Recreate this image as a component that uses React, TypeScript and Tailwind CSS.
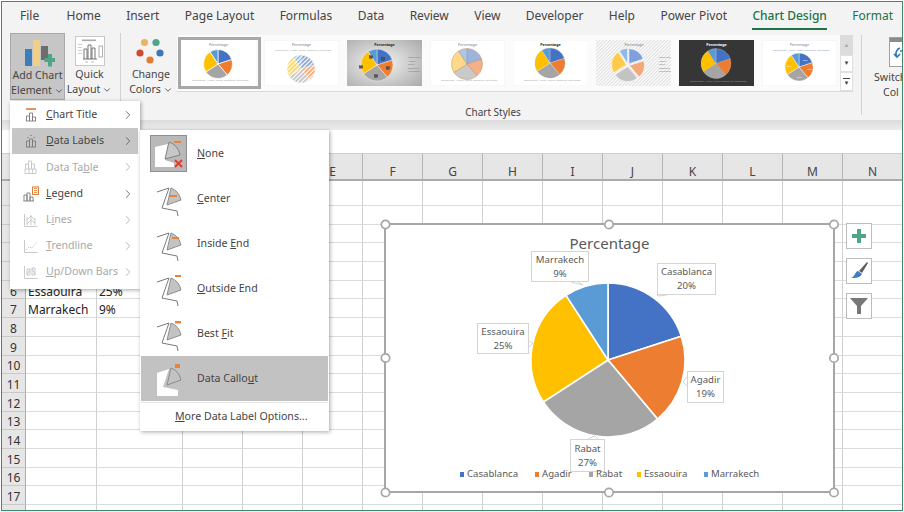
import React from "react";
import { ChevronDown, ChevronRight } from "lucide-react";

const COLORS = ["#4472c4", "#ed7d31", "#a5a5a5", "#ffc000", "#5b9bd5"];
const WASHED = ["#9db4e0", "#f5b08a", "#c9c9c9", "#ffd98a", "#a9c8e8"];
const ANGLES = [0, 72, 140, 237, 327, 360];

function pt(cx: number, cy: number, r: number, a: number) {
  const t = (a * Math.PI) / 180;
  return [cx + r * Math.sin(t), cy - r * Math.cos(t)];
}
function slice(cx: number, cy: number, r: number, a0: number, a1: number) {
  const [x0, y0] = pt(cx, cy, r, a0);
  const [x1, y1] = pt(cx, cy, r, a1);
  return `M${cx} ${cy}L${x0.toFixed(2)} ${y0.toFixed(2)}A${r} ${r} 0 ${a1 - a0 > 180 ? 1 : 0} 1 ${x1.toFixed(2)} ${y1.toFixed(2)}Z`;
}
function Pie({ cx, cy, r, colors = COLORS, stroke = "#fff", sw = 0.7, explode = 0 }: { cx: number; cy: number; r: number; colors?: string[]; stroke?: string; sw?: number; explode?: number }) {
  return (
    <g>
      {colors.map((c, i) => {
        const mid = (ANGLES[i] + ANGLES[i + 1]) / 2;
        const [dx, dy] = pt(0, 0, explode, mid);
        return <path key={i} d={slice(cx + dx, cy + dy, r, ANGLES[i], ANGLES[i + 1])} fill={c} stroke={stroke} strokeWidth={sw} />;
      })}
    </g>
  );
}

function LegendLines({ y, color = "#a0a0a0", x0 = 11 }: { y: number; color?: string; x0?: number }) {
  return (
    <g fill={color} fontSize="2.5" fontFamily="Noto Sans, sans-serif">
      <text x={x0} y={y}>Casablanca</text>
      <text x={x0 + 15} y={y}>Agadir</text>
      <text x={x0 + 24} y={y}>Rabat</text>
      <text x={x0 + 32} y={y}>Essaouira</text>
      <text x={x0 + 44} y={y}>Marrakech</text>
    </g>
  );
}
function SideLegend({ x, y, color = "#8a8a8a" }: { x: number; y: number; color?: string }) {
  return (
    <g fill={color} fontSize="2.4" fontFamily="Noto Sans, sans-serif">
      {["Casablanca", "Agadir", "Rabat", "Essaouira", "Marrakech"].map((t, i) => (
        <text key={t} x={x} y={y + i * 3.6}>{t}</text>
      ))}
    </g>
  );
}
function Title({ x = 37.5, y = 6, bold = false, color = "#777" }: { x?: number; y?: number; bold?: boolean; color?: string }) {
  return (
    <text x={x} y={y} textAnchor="middle" fontSize="3.6" fontWeight={bold ? 700 : 400} fill={color} fontFamily="Noto Sans, sans-serif">
      Percentage
    </text>
  );
}

function Thumb({ v }: { v: number }) {
  const id = `t${v}`;
  return (
    <svg width="75" height="46" viewBox="0 0 75 46" className="block shrink-0">
      <defs>
        <pattern id={`${id}s`} width="2.4" height="2.4" patternUnits="userSpaceOnUse" patternTransform="rotate(45)">
          <rect width="2.4" height="2.4" fill="#fff" />
          <rect width="1.1" height="2.4" fill="#ddd" />
        </pattern>
        <radialGradient id={`${id}g`} cx="0.45" cy="0.5" r="0.75">
          <stop offset="0" stopColor="#f4f4f4" />
          <stop offset="1" stopColor="#a9a9a9" />
        </radialGradient>
        {COLORS.map((c, i) => (
          <pattern key={c} id={`${id}p${i}`} width="3" height="3" patternUnits="userSpaceOnUse" patternTransform="rotate(-45)">
            <rect width="3" height="3" fill="#fff" />
            <rect width="3" height="1.6" fill={c} opacity="0.75" />
          </pattern>
        ))}
      </defs>
      {v === 1 && (
        <g>
          <rect width="75" height="46" fill="#fff" />
          <Title y={5.5} />
          <Pie cx={37} cy={24} r={14.5} />
          <LegendLines y={41} />
        </g>
      )}
      {v === 2 && (
        <g>
          <rect width="75" height="46" fill="#fff" stroke="#f0f0f0" />
          <Title y={5.5} />
          <LegendLines y={11} />
          <Pie cx={37} cy={29} r={14} colors={COLORS.map((_, i) => `url(#${id}p${i})`)} sw={0.3} />
        </g>
      )}
      {v === 3 && (
        <g>
          <rect width="75" height="46" fill={`url(#${id}g)`} />
          <Title y={6} bold color="#222" />
          <Pie cx={30} cy={25} r={16} sw={0.4} />
          {[[24, 17], [36, 19], [14, 27], [41, 28], [29, 36]].map(([x, y]) => (
            <rect key={x} x={x - 1.6} y={y - 1.2} width="3.2" height="2.4" fill="#555" stroke="#222" strokeWidth="0.3" />
          ))}
          <SideLegend x={61} y={18} color="#777" />
        </g>
      )}
      {v === 4 && (
        <g>
          <rect width="75" height="46" fill="#fff" stroke="#f0f0f0" />
          <Title y={5.5} />
          <Pie cx={37} cy={24} r={15.5} colors={WASHED} stroke="#c09060" sw={0.5} />
          <LegendLines y={41} />
        </g>
      )}
      {v === 5 && (
        <g>
          <rect width="75" height="46" fill="#fff" stroke="#f4f4f4" />
          <Title y={5.5} bold color="#222" />
          <Pie cx={37} cy={23} r={15} sw={0.2} />
          <circle cx={37} cy={23} r={15} fill="none" stroke="#555" strokeOpacity="0.15" strokeWidth="1" />
          <LegendLines y={41} />
        </g>
      )}
      {v === 6 && (
        <g>
          <rect width="75" height="46" fill={`url(#${id}s)`} />
          <Title x={38} y={6} />
          <Pie cx={32} cy={25} r={15} colors={["#7fa0de", "#f3a877", "#c3c3c3", "#ffcb4a", "#8fbae6"]} sw={0.5} explode={1.6} />
          <SideLegend x={63} y={18} color="#777" />
        </g>
      )}
      {v === 7 && (
        <g>
          <rect width="75" height="46" fill="#363636" />
          <Title y={6} bold color="#fff" />
          <Pie cx={37} cy={23.5} r={15} sw={0.2} />
          <LegendLines y={42} color="#9a9a9a" />
        </g>
      )}
      {v === 8 && (
        <g>
          <rect width="75" height="46" fill="#fff" stroke="#f0f0f0" />
          <Title y={5.5} />
          <LegendLines y={11} color="#7d95c9" />
          <Pie cx={37} cy={27} r={14} sw={0.4} />
          <g fill="#fff" fontSize="2.4" fontFamily="Noto Sans, sans-serif">
            <text x={41} y={21}>20%</text>
            <text x={45} y={30}>19%</text>
            <text x={35} y={38}>27%</text>
            <text x={25} y={27}>25%</text>
          </g>
        </g>
      )}
    </svg>
  );
}

function AddChartIcon() {
  return (
    <svg width="34" height="28" viewBox="0 0 34 28">
      <rect x="4" y="10" width="7" height="17" fill="#2e75b6" opacity="0.9" />
      <rect x="12" y="1" width="7" height="26" fill="#f3cf85" />
      <rect x="20" y="7" width="7" height="14" fill="#6d6d6d" />
      <path d="M23.5 19h3.5v-4h4v4h3v4h-3v4.5h-4V23h-3.5z" fill="#4fa58a" />
    </svg>
  );
}
function QuickLayoutIcon() {
  return (
    <svg width="30" height="30" viewBox="0 0 30 30">
      <rect x="0.5" y="0.5" width="29" height="29" fill="#fff" stroke="#c8c8c8" />
      <rect x="7" y="3.5" width="14" height="1.6" fill="#aaa" />
      <rect x="3" y="8" width="4" height="1" fill="#ccc" />
      <rect x="3" y="11" width="4" height="1" fill="#ccc" />
      <rect x="3" y="14" width="4" height="1" fill="#ccc" />
      <rect x="3" y="17" width="4" height="1" fill="#ccc" />
      <path d="M9 23V13h3v10M13 23V9h3v14M17 23V12h3v11M8 23h14" fill="none" stroke="#666" strokeWidth="0.9" />
      <rect x="24" y="10" width="3.5" height="11" fill="#fff" stroke="#999" strokeWidth="0.8" />
      <rect x="10" y="25.5" width="3" height="1" fill="#bbb" />
      <rect x="16" y="25.5" width="3" height="1" fill="#bbb" />
    </svg>
  );
}
function ColorsIcon() {
  return (
    <svg width="30" height="28" viewBox="0 0 30 28">
      <circle cx="8.5" cy="4.5" r="3.6" fill="#e9b565" />
      <circle cx="20" cy="4.5" r="3.6" fill="#4fa58a" />
      <circle cx="4" cy="15" r="3.6" fill="#d1492e" />
      <circle cx="24" cy="15" r="3.6" fill="#3a78b8" />
      <circle cx="14" cy="22" r="3.6" fill="#e57b2c" />
    </svg>
  );
}
function SwitchIcon() {
  return (
    <svg width="24" height="30" viewBox="0 0 24 30" className="block">
      <rect x="0.5" y="0.5" width="23" height="29" fill="#fff" stroke="#a0a0a0" />
      <rect x="1" y="1" width="22" height="4" fill="#8a8a8a" />
      <path d="M11 11a6 6 0 0 0-3 9M5 17l3 3 3-3M17 14h-6" fill="none" stroke="#2f75b5" strokeWidth="1.6" />
    </svg>
  );
}

function MenuIcon({ kind }: { kind: string }) {
  const g = "#7a7a7a";
  const d = "#c4c4c4";
  return (
    <svg width="16" height="16" viewBox="0 0 16 16">
      {kind === "title" && (
        <g fill="none" stroke={g} strokeWidth="0.9">
          <path d="M3 2h10" stroke="#e07b39" strokeWidth="1.6" />
          <path d="M3.5 14V9h3v5M6.5 14V6h3v8M9.5 14v-4h3v4M3 14h10" />
        </g>
      )}
      {kind === "data" && (
        <g fill="none" stroke={g} strokeWidth="0.9">
          <path d="M3.5 14V8h3v6M6.5 14V6h3v8M9.5 14V8h3v6M3 14h10" />
          <path d="M4 4.5h1.8M7.2 2.5H9M10.4 4.5h1.8" stroke="#e07b39" strokeWidth="1.2" />
        </g>
      )}
      {kind === "table" && (
        <g fill="none" stroke={d} strokeWidth="0.9">
          <path d="M2.5 10V5h3v5M5.5 10V2h3v8M8.5 10V5h3v5" />
          <path d="M2 10h11v4.5H2zM6 10v4.5M9.5 10v4.5" />
        </g>
      )}
      {kind === "legend" && (
        <g>
          <g fill="none" stroke={g} strokeWidth="0.9">
            <path d="M1 15v-6h3v6M4 15V7h3v8M7 15v-4h3v4M.5 15h10.5" />
          </g>
          <rect x="9.5" y="1" width="6" height="7.5" fill="#fff" stroke="#e07b39" />
          <path d="M11 3h3M11 5h3M11 7h3" stroke="#e07b39" strokeWidth="0.8" transform="translate(0 -.5)" />
        </g>
      )}
      {kind === "lines" && (
        <g fill="none" stroke={d} strokeWidth="0.9">
          <path d="M1.5 2v12.5h13" />
          <path d="M4 5v8M8 3v10M12 6v7" />
          <path d="M4 8l4-4 4 4M4 12l4-4 4 3" />
        </g>
      )}
      {kind === "trend" && (
        <g fill="none" stroke={d} strokeWidth="0.9">
          <path d="M1.5 2v12.5h13" />
          <path d="M3 12l3-3 3 1 5-6" strokeDasharray="1.6 1" />
        </g>
      )}
      {kind === "updown" && (
        <g fill="none" stroke={d} strokeWidth="0.9">
          <path d="M1.5 2v12.5h13" />
          <path d="M4 5h3v6H4zM9 4h3v7H9z" />
          <path d="M4 11l3-6M9 4l3 7" />
        </g>
      )}
    </svg>
  );
}

function Wedge({ dash, callout }: { dash: [number, number, number, number]; callout?: boolean }) {
  return (
    <svg width="37" height="37" viewBox="0 0 37 37">
      {callout ? (
        <path d="M7 13l12-4-6 18 15 3v6H7z" fill="#fff" />
      ) : (
        <path d="M7 12l12-4-7 20 15 3 1 5" fill="none" stroke="#7a7a7a" strokeWidth="1" />
      )}
      <path d="M17 25L21 8q8 3 10 12z" fill="#c3c3c3" stroke="#858585" strokeWidth="0.9" />
      <rect x={dash[0]} y={dash[1]} width={dash[2]} height={dash[3]} fill="#e8833a" />
    </svg>
  );
}

const tabs = ["File", "Home", "Insert", "Page Layout", "Formulas", "Data", "Review", "View", "Developer", "Help", "Power Pivot", "Chart Design", "Format"];
const colLetters = ["", "A", "B", "C", "D", "E", "F", "G", "H", "I", "J", "K", "L", "M", "N"];
const rowNums = Array.from({ length: 18 }, (_, i) => i + 1);
const cellText: Record<string, string> = { "6-1": "Essaouira", "6-2": "25%", "7-1": "Marrakech", "7-2": "9%" };

function Sheet() {
  return (
    <div className="grid grid-cols-[24px_71px_86px_repeat(12,60px)] grid-rows-[27px_25px] auto-rows-[18.7px] flex-1 overflow-hidden bg-white">
      {colLetters.map((c, i) => (
        <div key={i} className="bg-[#e6e6e6] border-b-2 border-b-[#ababab] border-r border-r-[#b4b4b4] flex items-center justify-center pt-[11px] text-[12px] text-[#444]">
          {c}
        </div>
      ))}
      {rowNums.map((r) => (
        <React.Fragment key={r}>
          <div className="bg-[#e6e6e6] border-b border-b-[#c8c8c8] border-r border-r-[#ababab] flex items-center justify-center pt-[4px] text-[12px] text-[#333]">{r < 18 ? r : ""}</div>
          {colLetters.slice(1).map((_, i) => (
            <div key={i} className="border-b border-b-[#dcdcdc] border-r border-r-[#d0d0d0] flex items-center pl-[2px] pt-[4px] text-[12px] text-[#222] whitespace-nowrap">
              {cellText[`${r}-${i + 1}`] ?? ""}
            </div>
          ))}
        </React.Fragment>
      ))}
    </div>
  );
}

const menu1 = [
  { k: "title", pre: "", u: "C", post: "hart Title" },
  { k: "data", pre: "", u: "D", post: "ata Labels", active: true },
  { k: "table", pre: "Data Ta", u: "b", post: "le", off: true },
  { k: "legend", pre: "", u: "L", post: "egend" },
  { k: "lines", pre: "L", u: "i", post: "nes", off: true },
  { k: "trend", pre: "", u: "T", post: "rendline", off: true },
  { k: "updown", pre: "", u: "U", post: "p/Down Bars", off: true },
];

function ElementMenu() {
  return (
    <div className="absolute left-[10px] top-[101px] w-[130px] h-[188px] bg-white shadow-[1px_1px_4px_rgba(0,0,0,0.35)] py-px text-[10.6px]">
      {menu1.map((m) => (
        <div key={m.k} className={`flex items-center h-[26.2px] mx-[2px] pl-[11px] pr-[3px] ${m.active ? "bg-[#c6c6c6]" : ""} ${m.off ? "text-[#a8a8a8]" : "text-[#444]"}`}>
          <span className="w-[23px] shrink-0"><MenuIcon kind={m.k} /></span>
          <span className="whitespace-nowrap">
            {m.pre}<span className="underline">{m.u}</span>{m.post}
          </span>
          <ChevronRight size={14} strokeWidth={1.4} className={`ml-auto ${m.off ? "text-[#a8a8a8]" : "text-[#555]"}`} />
        </div>
      ))}
    </div>
  );
}

type D = [number, number, number, number];
const menu2 = [
  { pre: "", u: "N", post: "one", dash: [24, 7, 8, 2] as D },
  { pre: "", u: "C", post: "enter", dash: [19, 15, 8, 2] as D },
  { pre: "Inside ", u: "E", post: "nd", dash: [22, 12, 7, 2] as D },
  { pre: "", u: "O", post: "utside End", dash: [25, 5, 6, 2] as D },
  { pre: "Best ", u: "F", post: "it", dash: [25, 6, 6, 2.5] as D },
  { pre: "Data Callo", u: "u", post: "t", dash: [25, 4, 5, 4] as D, callout: true, active: true },
];

function LabelsMenu() {
  return (
    <div className="absolute left-[140px] top-[130px] w-[189px] h-[301px] bg-white shadow-[1px_1px_4px_rgba(0,0,0,0.35)] py-px text-[10.6px] text-[#444]">
      {menu2.map((m, i) => (
        <div key={m.post} className={`flex items-center h-[45px] mx-px pl-[9px] gap-[10px] ${m.active ? "bg-[#c2c2c2]" : ""}`}>
          {i === 0 ? (
            <span className="relative block w-[37px] h-[37px] bg-[#b9b9b9] border border-[#8f8f8f]">
              <svg width="35" height="35" viewBox="0 0 35 35" className="block">
                <path d="M4 11l13-3-3 16 9 3v4H4z" fill="#fff" />
                <path d="M14 23L18 6q9 3 11 13z" fill="#c7c7c7" stroke="#7b7b7b" strokeWidth="0.9" />
                <rect x="23" y="5" width="7" height="2" fill="#e8833a" />
                <path d="M24 24l7 7M31 24l-7 7" stroke="#d9412f" strokeWidth="2" />
              </svg>
            </span>
          ) : (
            <Wedge dash={m.dash} callout={m.callout} />
          )}
          <span className="whitespace-nowrap">
            {m.pre}<span className="underline">{m.u}</span>{m.post}
          </span>
        </div>
      ))}
      <div className="h-px bg-[#e4e4e4] mt-px mx-px" />
      <div className="h-[27px] pl-[35px] flex items-center whitespace-nowrap">
        <span><span className="underline">M</span>ore Data Label Options...</span>
      </div>
    </div>
  );
}

function Handle({ x, y }: { x: number; y: number }) {
  return <circle cx={x} cy={y} r="4.2" fill="#fff" stroke="#a6a6a6" strokeWidth="1.7" />;
}

const ORIGIN_X = 385;
const ORIGIN_Y = 224;
const boxes = [
  { a: "Marrakech", b: "9%", l: 531, t: 251, w: 58, h: 31 },
  { a: "Casablanca", b: "20%", l: 657, t: 263, w: 59, h: 32 },
  { a: "Essaouira", b: "25%", l: 477, t: 323, w: 52, h: 31 },
  { a: "Agadir", b: "19%", l: 687, t: 371, w: 37, h: 32 },
  { a: "Rabat", b: "27%", l: 570, t: 439, w: 35, h: 33 },
];

function Chart() {
  const cx = 608 - ORIGIN_X;
  const cy = 360 - ORIGIN_Y;
  return (
    <>
      <div className="absolute left-[384px] top-[223px] w-[451px] h-[270px] bg-white border-2 border-[#a6a6a6]">
        <div className="absolute left-0 right-0 top-[8px] text-center text-[15px] leading-5 text-[#595959]">Percentage</div>
      </div>
      <svg width="460" height="280" viewBox="-5 -5 460 280" className="absolute left-[380px] top-[219px]">
        <Pie cx={cx} cy={cy} r={77} sw={1.6} />
        <path d={`M${571 - ORIGIN_X} ${282 - ORIGIN_Y}l12 3-5-3`} fill="#fff" stroke="#ccc" strokeWidth="0.8" />
        <path d={`M${657 - ORIGIN_X} ${295 - ORIGIN_Y}l2 1 8-1`} fill="#fff" stroke="#ccc" strokeWidth="0.8" />
        <path d={`M${529 - ORIGIN_X} ${341 - ORIGIN_Y}l4 2-4 4`} fill="#fff" stroke="#ccc" strokeWidth="0.8" />
        <path d={`M${687 - ORIGIN_X} ${377 - ORIGIN_Y}l-4 5 4 4`} fill="#fff" stroke="#ccc" strokeWidth="0.8" />
        <path d={`M${588 - ORIGIN_X} ${439 - ORIGIN_Y}l7-3 3 3`} fill="#fff" stroke="#ccc" strokeWidth="0.8" />
        <Handle x={0.5} y={0.5} />
        <Handle x={224} y={0.5} />
        <Handle x={449} y={0.5} />
        <Handle x={0.5} y={134} />
        <Handle x={449} y={134} />
        <Handle x={0.5} y={268.5} />
        <Handle x={224} y={268.5} />
        <Handle x={449} y={268.5} />
      </svg>
      {boxes.map((b) => (
        <div
          key={b.a}
          className="absolute bg-white border border-[#d4d4d4] flex flex-col items-center justify-center text-[9.6px] leading-[14px] text-[#595959]"
          style={{ left: b.l, top: b.t, width: b.w, height: b.h }}
        >
          <span>{b.a}</span>
          <span>{b.b}</span>
        </div>
      ))}
      <div className="absolute left-[459px] top-[467px] flex items-center text-[9.6px] leading-[14px] text-[#595959]">
        {[
          ["Casablanca", "#4472c4", "w-[75px]"],
          ["Agadir", "#ed7d31", "w-[54px]"],
          ["Rabat", "#a5a5a5", "w-[48px]"],
          ["Essaouira", "#ffc000", "w-[67px]"],
          ["Marrakech", "#5b9bd5", "w-[70px]"],
        ].map(([t, c, w]) => (
          <span key={t} className={`flex items-center gap-[3px] shrink-0 ${w}`}>
            <span className="w-[4px] h-[5px] shrink-0 ml-px" style={{ background: c }} />
            <span className="whitespace-nowrap">{t}</span>
          </span>
        ))}
      </div>
    </>
  );
}

function SideButtons() {
  return (
    <div className="absolute left-[846px] top-[223px] flex flex-col gap-[9px]">
      <div className="w-[26px] h-[26px] bg-white border border-[#bdbdbd] flex items-center justify-center">
        <svg width="14" height="14" viewBox="0 0 14 14"><path d="M5 0h4v5h5v4H9v5H5V9H0V5h5z" fill="#4fa58a" /></svg>
      </div>
      <div className="w-[26px] h-[26px] bg-white border border-[#bdbdbd] flex items-center justify-center">
        <svg width="20" height="20" viewBox="0 0 20 20">
          <path d="M10 10L18 1l1 1-6 10z" fill="#5f5f5f" />
          <path d="M9 10l4 3c-2 4-6 4-11 4 2-1 3-2 4-4 1-2 2-3 3-3z" fill="#3f7cc4" />
        </svg>
      </div>
      <div className="w-[26px] h-[26px] bg-white border border-[#bdbdbd] flex items-center justify-center">
        <svg width="20" height="20" viewBox="0 0 20 20"><path d="M1 2h18l-7 8v8H8v-8z" fill="#777" /></svg>
      </div>
    </div>
  );
}

function BigBtn({ icon, a, b, cls }: { icon: React.ReactNode; a: string; b: string; cls: string }) {
  return (
    <div className={`flex flex-col items-center shrink-0 text-[10.6px] leading-[15px] text-[#444] ${cls}`}>
      <div className="h-[33px] flex items-end justify-center shrink-0">{icon}</div>
      <div className="mt-[1px] whitespace-nowrap">{a}</div>
      <div className="flex items-center whitespace-nowrap">
        {b}
        <ChevronDown size={10} strokeWidth={2} className="ml-[2px]" />
      </div>
    </div>
  );
}

export default function App() {
  return (
    <div className="relative w-[904px] h-[512px] bg-white overflow-hidden p-px font-['Noto_Sans',sans-serif]">
      <div className="flex flex-col h-full border border-[#3d8a66] bg-white">
        <div className="flex h-[28px] shrink-0 bg-[#f3f3f3] pl-[18px] gap-[25.4px] text-[12px] leading-[28px] text-[#444]">
          {tabs.map((t) => (
            <div
              key={t}
              className={`relative whitespace-nowrap ${t === "File" ? "mr-[2px]" : ""} ${t === "Chart Design" ? "text-[#217346] font-medium" : t === "Format" ? "text-[#217346]" : ""}`}
            >
              {t}
              {t === "Chart Design" && <span className="absolute left-0 right-0 bottom-0 h-[2px] bg-[#217346]" />}
            </div>
          ))}
        </div>
        <div className="flex h-[90px] shrink-0 bg-[#f3f3f3] pl-[8px] overflow-hidden">
          <BigBtn icon={<AddChartIcon />} a="Add Chart" b="Element" cls="w-[55px] h-[67px] mt-[3px] bg-[#c6c6c6] border border-[#a9a9a9]" />
          <BigBtn icon={<QuickLayoutIcon />} a="Quick" b="Layout" cls="w-[45px] h-[67px] mt-[3px] ml-[2px]" />
          <div className="w-px h-[68px] bg-[#d2d2d2] mt-[3px] ml-[8px] shrink-0" />
          <div className="flex flex-col w-[736px] ml-[4px] shrink-0">
            <div className="flex h-[75px]">
              <BigBtn icon={<ColorsIcon />} a="Change" b="Colors" cls="w-[52px] h-[67px] mt-[3px]" />
              <div className="flex h-[57px] w-[676px] mt-[5px] bg-[#fbfbfb] border-b border-b-[#dadada] shrink-0">
                <div className="flex gap-[8px] flex-1 items-center pl-[3px] pb-[1px]">
                  <div className="w-[83px] h-[52px] border-[3px] border-[#a8a8a8] shrink-0 ml-[-2px] mr-[-5px]">
                    <Thumb v={1} />
                  </div>
                  {[2, 3, 4, 5, 6, 7, 8].map((v) => <Thumb key={v} v={v} />)}
                </div>
                <div className="flex flex-col w-[13px] shrink-0 text-[#444]">
                  <div className="h-[20px] bg-[#dcdcdc] flex items-center justify-center text-[6px] leading-none text-[#aaa]">▲</div>
                  <div className="h-[18px] bg-white border border-[#e0e0e0] flex items-center justify-center text-[6px] leading-none">▼</div>
                  <div className="h-[19px] bg-white border border-[#e0e0e0] flex flex-col items-center justify-center text-[6px] leading-none">
                    <span className="w-[7px] h-px bg-[#444] mb-px" />▼
                  </div>
                </div>
              </div>
            </div>
            <div className="text-center text-[10px] leading-[14px] text-[#444]">Chart Styles</div>
          </div>
          <div className="w-px h-[80px] bg-[#d2d2d2] mt-[5px] shrink-0" />
          <div className="flex flex-col items-start w-[38px] ml-[12px] shrink-0 text-[10.6px] leading-[15px] text-[#444] overflow-hidden">
            <div className="mt-[7px] h-[30px] ml-[15px]"><SwitchIcon /></div>
            <div className="mt-[3px] whitespace-nowrap">Switch</div>
            <div className="ml-[9px] whitespace-nowrap">Col</div>
          </div>
        </div>
        <div className="h-[10px] shrink-0 bg-gradient-to-b from-[#dcdcdc] to-[#ececec]" />
        <div className="h-[24px] shrink-0 bg-white border-b border-b-[#cfcfcf]" />
        <Sheet />
      </div>
      <Chart />
      <SideButtons />
      <ElementMenu />
      <LabelsMenu />
    </div>
  );
}
